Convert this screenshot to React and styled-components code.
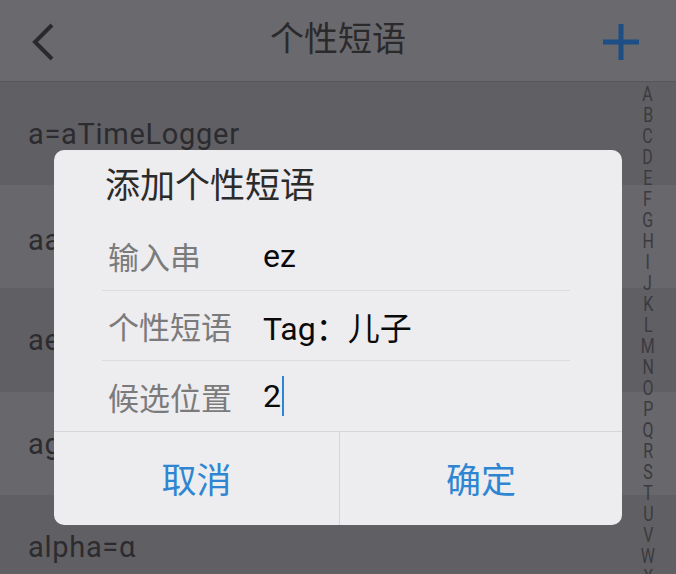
import React from 'react';
import styled, { createGlobalStyle } from 'styled-components';

const GlobalStyle = createGlobalStyle`
    html, body {
        margin: 0;
        padding: 0;
        width: 676px;
        height: 574px;
        overflow: hidden;
        background: #5f5e62;
        font-family: Roboto, "Noto Sans CJK SC", sans-serif;
    }
`;

const Screen = styled.div`
    position: relative;
    width: 676px;
    height: 574px;
    overflow: hidden;
`;

const TopBar = styled.div`
    height: 81px;
    display: grid;
    grid-template-columns: 90px 1fr 90px;
    align-items: center;
    background: #6a696d;
    border-bottom: 1px solid #57565a;
`;

const BackButton = styled.div`
    display: flex;
    align-items: center;
    padding-left: 30px;
    padding-top: 2px;
`;

const AddButton = styled.div`
    display: flex;
    justify-content: flex-end;
    padding-right: 36px;
    padding-top: 2px;
`;

const TopTitle = styled.div`
    text-align: center;
    font-family: "Noto Sans CJK SC", sans-serif;
    font-size: 34px;
    color: #2a2a2c;
    padding-bottom: 8px;
`;

const List = styled.div`
    display: flex;
    flex-direction: column;
`;

const Row = styled.div`
    height: ${p => p.h}px;
    display: flex;
    align-items: center;
    padding-left: 28px;
    background: ${p => (p.light ? '#68676b' : '#605f63')};
    font-size: 29px;
    letter-spacing: 0.7px;
    color: #2c2b2f;
`;

const IndexBar = styled.div`
    position: absolute;
    top: 84px;
    right: 16px;
    width: 24px;
    display: flex;
    flex-direction: column;
    align-items: center;
`;

const IndexLetter = styled.span`
    font-size: 20px;
    line-height: 21px;
    height: 21px;
    color: #3b3a3e;
    transform: scale(0.8, 1.05);
`;

const Dialog = styled.div`
    position: absolute;
    top: 150px;
    left: 54px;
    width: 568px;
    height: 375px;
    background: #edecef;
    border-radius: 10px;
    display: flex;
    flex-direction: column;
    overflow: hidden;
`;

const DialogTitle = styled.div`
    height: 71px;
    box-sizing: border-box;
    padding: 15px 0 0 51px;
    font-family: "Noto Sans CJK SC", sans-serif;
    font-size: 35px;
    line-height: 36px;
    color: #2b2b2b;
`;

const Fields = styled.div`
    margin: 0 52px 0 48px;
    display: flex;
    flex-direction: column;
`;

const Field = styled.div`
    height: 70px;
    box-sizing: border-box;
    display: grid;
    grid-template-columns: 155px 1fr;
    align-items: center;
    padding-left: 6px;
    border-bottom: ${p => (p.last ? 'none' : '1px solid #dcdbde')};
`;

const FieldLabel = styled.span`
    font-family: "Noto Sans CJK SC", sans-serif;
    font-size: 31px;
    color: #7b7b7b;
`;

const FieldValue = styled.span`
    display: flex;
    align-items: center;
    font-family: Roboto, "Noto Sans CJK SC", sans-serif;
    font-size: 32px;
    color: #0a0a0a;
`;

const Caret = styled.span`
    display: inline-block;
    width: 2px;
    height: 40px;
    margin-left: 1px;
    background: #2e86d2;
`;

const Actions = styled.div`
    flex: 1;
    display: grid;
    grid-template-columns: 285px 1fr;
    border-top: 1px solid #d6d5d8;
`;

const ActionButton = styled.div`
    display: flex;
    align-items: center;
    justify-content: center;
    font-family: "Noto Sans CJK SC", sans-serif;
    font-size: 35px;
    color: #2e86d2;
    padding-bottom: 2px;
    border-left: ${p => (p.divided ? '1px solid #d6d5d8' : 'none')};
`;

const rows = [
    { text: 'a=aTimeLogger', light: false, h: 103 },
    { text: 'aa=AA制', light: true, h: 103 },
    { text: 'ae=æ', light: false, h: 104 },
    { text: 'ag=agree', light: true, h: 103 },
    { text: 'alpha=α', light: false, h: 104 },
];

const letters = 'ABCDEFGHIJKLMNOPQRSTUVWX'.split('');

const App = () => (
    <Screen>
        <GlobalStyle />
        <TopBar>
            <BackButton>
                <svg width="26" height="40" viewBox="0 0 26 40">
                    <polyline points="22,3 5,20 22,37" fill="none" stroke="#2a2a2c" strokeWidth="4" />
                </svg>
            </BackButton>
            <TopTitle>个性短语</TopTitle>
            <AddButton>
                <svg width="38" height="38" viewBox="0 0 38 38">
                    <path d="M19 1 V37 M1 19 H37" stroke="#1d4e86" strokeWidth="5" />
                </svg>
            </AddButton>
        </TopBar>

        <List>
            {rows.map(r => (
                <Row key={r.text} light={r.light} h={r.h}>{r.text}</Row>
            ))}
        </List>

        <IndexBar>
            {letters.map(l => (
                <IndexLetter key={l}>{l}</IndexLetter>
            ))}
        </IndexBar>

        <Dialog>
            <DialogTitle>添加个性短语</DialogTitle>
            <Fields>
                <Field>
                    <FieldLabel>输入串</FieldLabel>
                    <FieldValue>ez</FieldValue>
                </Field>
                <Field>
                    <FieldLabel>个性短语</FieldLabel>
                    <FieldValue>Tag：儿子</FieldValue>
                </Field>
                <Field last>
                    <FieldLabel>候选位置</FieldLabel>
                    <FieldValue>2<Caret /></FieldValue>
                </Field>
            </Fields>
            <Actions>
                <ActionButton>取消</ActionButton>
                <ActionButton divided>确定</ActionButton>
            </Actions>
        </Dialog>
    </Screen>
);

export default App;
